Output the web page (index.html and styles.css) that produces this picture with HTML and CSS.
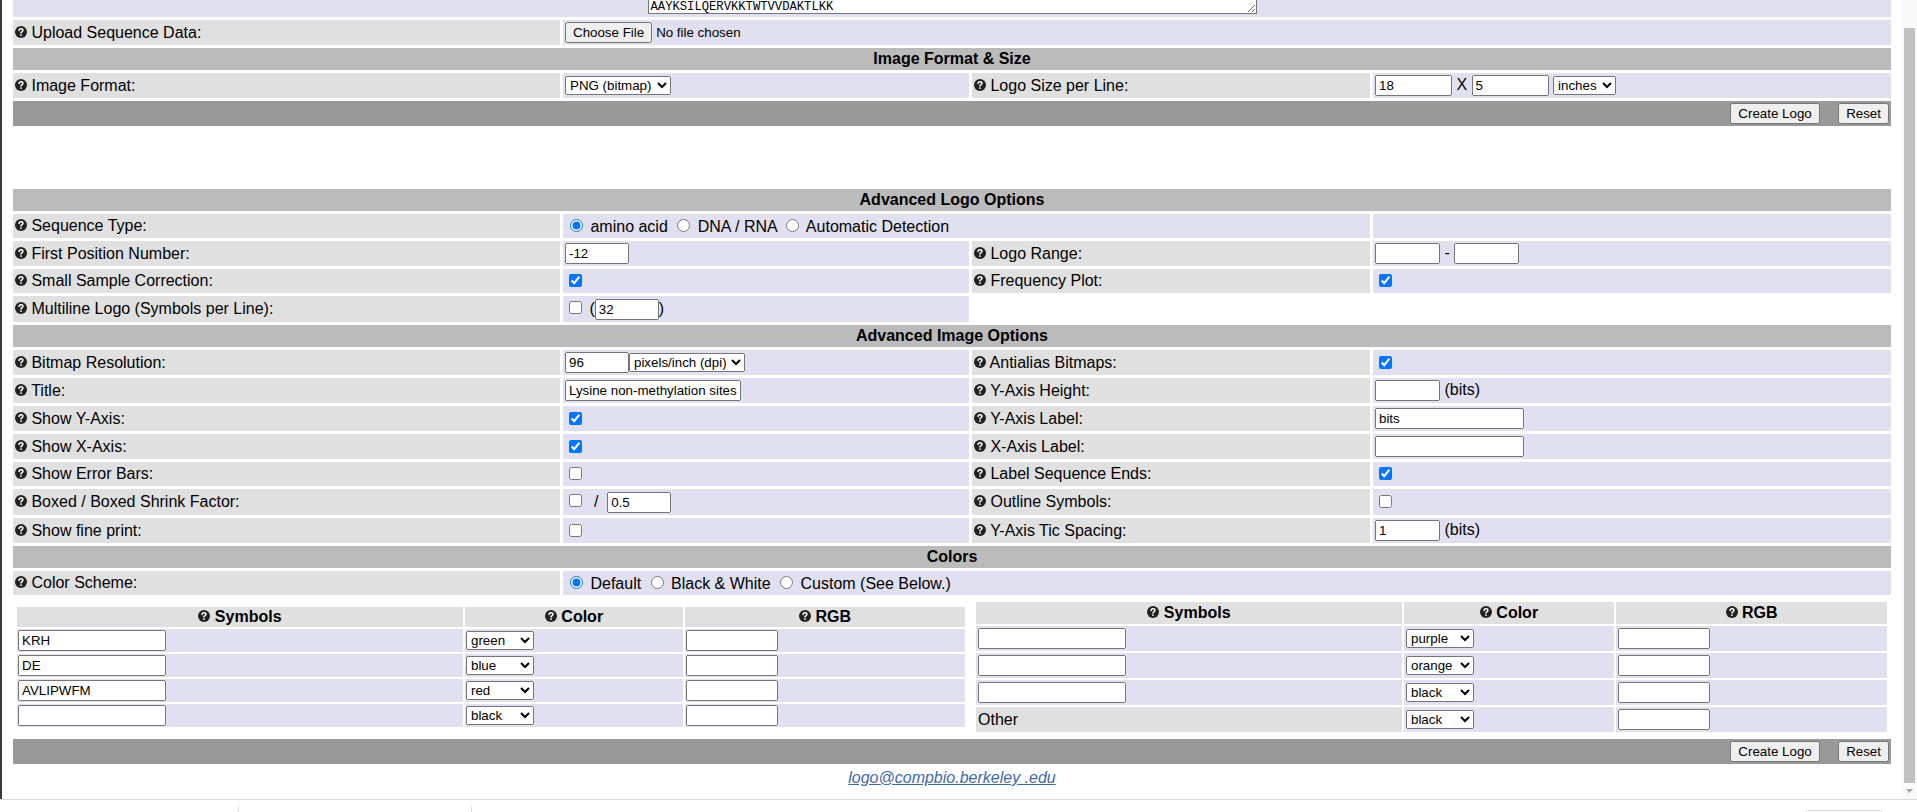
FILE: index.html
```html
<!DOCTYPE html>
<html lang="en">
<head>
<meta charset="utf-8">
<title>WebLogo - Create Sequence Logos</title>
<link rel="stylesheet" href="styles.css">
</head>
<body>
<svg class="svg-defs" xmlns="http://www.w3.org/2000/svg">
  <symbol id="qi" viewBox="0 0 12 12">
    <circle cx="6" cy="6" r="6" fill="#222"/>
    <path d="M4.1 4.5C4.1 3.4 4.9 2.7 6 2.7C7.1 2.7 7.9 3.4 7.9 4.3C7.9 5.1 7.3 5.5 6.8 5.8C6.3 6.1 6 6.4 6 7.1" fill="none" stroke="#fff" stroke-width="1.5" stroke-linecap="round"/>
    <circle cx="6" cy="9.1" r="0.95" fill="#fff"/>
  </symbol>
</svg>
<div class="screen">
  <div class="frame-edge"></div>
  <div class="viewport">
    <div class="page">
      <form class="logo-form" action="#">
        <table class="opts">
          <colgroup><col class="c1"><col class="c2"><col class="c3"><col class="c4"></colgroup>
          <tr>
            <td colspan="4" class="val seq-cell"><div class="seq-clip"><textarea class="seq" spellcheck="false" readonly>GGKKSILQERVKKTWTVVDAKTLKK
LLKKSILQERVKKTWTVVDAKTLKK
PPKKSILQERVKKTWTVVDAKTLKK
AAYKSILQERVKKTWTVVDAKTLKK</textarea></div></td>
          </tr>
          <tr>
            <td class="lab"><svg class="qi"><use href="#qi"/></svg> Upload Sequence Data:</td>
            <td colspan="3" class="val"><button type="button" class="btn">Choose File</button><span class="nofile">No file chosen</span></td>
          </tr>
          <tr><td colspan="4" class="head">Image Format &amp; Size</td></tr>
          <tr>
            <td class="lab"><svg class="qi"><use href="#qi"/></svg> Image Format:</td>
            <td class="val"><select class="sel w-png"><option>PNG (bitmap)</option></select></td>
            <td class="lab"><svg class="qi"><use href="#qi"/></svg> Logo Size per Line:</td>
            <td class="val"><input type="text" class="txt w77" value="18"> X <input type="text" class="txt w77" value="5"> <select class="sel w-inch"><option>inches</option></select></td>
          </tr>
          <tr>
            <td colspan="4" class="bar"><button type="button" class="btn">Create Logo</button> <button type="button" class="btn reset">Reset</button></td>
          </tr>
          <tr><td colspan="4" class="spacer"></td></tr>
          <tr><td colspan="4" class="head">Advanced Logo Options</td></tr>
          <tr>
            <td class="lab"><svg class="qi"><use href="#qi"/></svg> Sequence Type:</td>
            <td colspan="2" class="val"><input type="radio" name="st" checked> amino acid <input type="radio" name="st"> DNA / RNA <input type="radio" name="st"> Automatic Detection</td>
            <td class="val"></td>
          </tr>
          <tr>
            <td class="lab"><svg class="qi"><use href="#qi"/></svg> First Position Number:</td>
            <td class="val"><input type="text" class="txt w64" value="-12"></td>
            <td class="lab"><svg class="qi"><use href="#qi"/></svg> Logo Range:</td>
            <td class="val"><input type="text" class="txt w65" value=""> - <input type="text" class="txt w65" value=""></td>
          </tr>
          <tr>
            <td class="lab"><svg class="qi"><use href="#qi"/></svg> Small Sample Correction:</td>
            <td class="val"><input type="checkbox" checked></td>
            <td class="lab"><svg class="qi"><use href="#qi"/></svg> Frequency Plot:</td>
            <td class="val"><input type="checkbox" checked></td>
          </tr>
          <tr>
            <td class="lab"><svg class="qi"><use href="#qi"/></svg> Multiline Logo (Symbols per Line):</td>
            <td class="val"><input type="checkbox"> (<input type="text" class="txt w64" value="32">)</td>
          </tr>
          <tr><td colspan="4" class="head">Advanced Image Options</td></tr>
          <tr>
            <td class="lab"><svg class="qi"><use href="#qi"/></svg> Bitmap Resolution:</td>
            <td class="val"><input type="text" class="txt w64" value="96"><select class="sel w-dpi"><option>pixels/inch (dpi)</option></select></td>
            <td class="lab"><svg class="qi"><use href="#qi"/></svg> Antialias Bitmaps:</td>
            <td class="val"><input type="checkbox" checked></td>
          </tr>
          <tr>
            <td class="lab"><svg class="qi"><use href="#qi"/></svg> Title:</td>
            <td class="val"><input type="text" class="txt w176" value="Lysine non-methylation sites"></td>
            <td class="lab"><svg class="qi"><use href="#qi"/></svg> Y-Axis Height:</td>
            <td class="val"><input type="text" class="txt w65" value=""> (bits)</td>
          </tr>
          <tr>
            <td class="lab"><svg class="qi"><use href="#qi"/></svg> Show Y-Axis:</td>
            <td class="val"><input type="checkbox" checked></td>
            <td class="lab"><svg class="qi"><use href="#qi"/></svg> Y-Axis Label:</td>
            <td class="val"><input type="text" class="txt w149" value="bits"></td>
          </tr>
          <tr>
            <td class="lab"><svg class="qi"><use href="#qi"/></svg> Show X-Axis:</td>
            <td class="val"><input type="checkbox" checked></td>
            <td class="lab"><svg class="qi"><use href="#qi"/></svg> X-Axis Label:</td>
            <td class="val"><input type="text" class="txt w149" value=""></td>
          </tr>
          <tr>
            <td class="lab"><svg class="qi"><use href="#qi"/></svg> Show Error Bars:</td>
            <td class="val"><input type="checkbox"></td>
            <td class="lab"><svg class="qi"><use href="#qi"/></svg> Label Sequence Ends:</td>
            <td class="val"><input type="checkbox" checked></td>
          </tr>
          <tr>
            <td class="lab"><svg class="qi"><use href="#qi"/></svg> Boxed / Boxed Shrink Factor:</td>
            <td class="val"><input type="checkbox"> &nbsp;/ &nbsp;<input type="text" class="txt w64" value="0.5"></td>
            <td class="lab"><svg class="qi"><use href="#qi"/></svg> Outline Symbols:</td>
            <td class="val"><input type="checkbox"></td>
          </tr>
          <tr>
            <td class="lab"><svg class="qi"><use href="#qi"/></svg> Show fine print:</td>
            <td class="val"><input type="checkbox"></td>
            <td class="lab"><svg class="qi"><use href="#qi"/></svg> Y-Axis Tic Spacing:</td>
            <td class="val"><input type="text" class="txt w65" value="1"> (bits)</td>
          </tr>
          <tr><td colspan="4" class="head">Colors</td></tr>
          <tr>
            <td class="lab"><svg class="qi"><use href="#qi"/></svg> Color Scheme:</td>
            <td colspan="3" class="val"><input type="radio" name="cs" checked> Default <input type="radio" name="cs"> Black &amp; White <input type="radio" name="cs"> Custom (See Below.)</td>
          </tr>
          <tr>
            <td colspan="2" class="symcell">
              <table class="sym">
                <colgroup><col class="sl1"><col class="sl2"><col class="sl3"></colgroup>
                <tr><th><svg class="qi"><use href="#qi"/></svg> Symbols</th><th><svg class="qi"><use href="#qi"/></svg> Color</th><th><svg class="qi"><use href="#qi"/></svg> RGB</th></tr>
                <tr><td><input type="text" class="txt w148" value="KRH"></td><td><select class="sel w-col"><option>green</option></select></td><td><input type="text" class="txt w92" value=""></td></tr>
                <tr><td><input type="text" class="txt w148" value="DE"></td><td><select class="sel w-col"><option>blue</option></select></td><td><input type="text" class="txt w92" value=""></td></tr>
                <tr><td><input type="text" class="txt w148" value="AVLIPWFM"></td><td><select class="sel w-col"><option>red</option></select></td><td><input type="text" class="txt w92" value=""></td></tr>
                <tr><td><input type="text" class="txt w148" value=""></td><td><select class="sel w-col"><option>black</option></select></td><td><input type="text" class="txt w92" value=""></td></tr>
              </table>
            </td>
            <td colspan="2" class="symcell">
              <table class="sym wide">
                <colgroup><col class="sr1"><col class="sr2"><col class="sr3"></colgroup>
                <tr><th><svg class="qi"><use href="#qi"/></svg> Symbols</th><th><svg class="qi"><use href="#qi"/></svg> Color</th><th><svg class="qi"><use href="#qi"/></svg> RGB</th></tr>
                <tr><td><input type="text" class="txt w148" value=""></td><td><select class="sel w-col"><option>purple</option></select></td><td><input type="text" class="txt w92" value=""></td></tr>
                <tr><td><input type="text" class="txt w148" value=""></td><td><select class="sel w-col"><option>orange</option></select></td><td><input type="text" class="txt w92" value=""></td></tr>
                <tr><td><input type="text" class="txt w148" value=""></td><td><select class="sel w-col"><option>black</option></select></td><td><input type="text" class="txt w92" value=""></td></tr>
                <tr><td class="other">Other</td><td><select class="sel w-col"><option>black</option></select></td><td><input type="text" class="txt w92" value=""></td></tr>
              </table>
            </td>
          </tr>
          <tr>
            <td colspan="4" class="bar"><button type="button" class="btn">Create Logo</button> <button type="button" class="btn reset">Reset</button></td>
          </tr>
        </table>
      </form>
      <div class="footer"><a href="mailto:logo@compbio.berkeley.edu">logo@compbio.berkeley .edu</a></div>
    </div>
  </div>
  <div class="scrollbar">
    <div class="sb-thumb"></div>
    <div class="sb-down"><svg width="7" height="4" viewBox="0 0 7 4"><path d="M0 0H7L3.5 4Z" fill="#a3a3a3"/></svg></div>
  </div>
</div>
<div class="bottombar">
  <div class="bb-seg bb-a"></div>
  <div class="bb-seg bb-b"></div>
  <div class="bb-fill"></div>
  <div class="bb-box"></div>
  <div class="bb-end"></div>
</div>
</body>
</html>
```

FILE: styles.css
```css
html, body {
  margin: 0;
  padding: 0;
  background: #fff;
}
body {
  width: 1917px;
  height: 812px;
  overflow: hidden;
  font-family: "Liberation Sans", Arial, sans-serif;
  font-size: 16px;
  color: #000;
}
.svg-defs {
  display: none;
}
.screen {
  display: flex;
  height: 799px;
}
.frame-edge {
  flex: none;
  width: 2px;
  background: #3a3a3a;
}
.viewport {
  flex: 1;
  min-width: 0;
  overflow: hidden;
}
.page {
  padding: 0 8px;
}
.logo-form {
  margin: 0;
}

/* main options table */
.opts {
  width: 1884px;
  table-layout: fixed;
  border-spacing: 3px;
  margin-top: -3px;
}
.opts td {
  padding: 2px;
}
.c1 { width: 547px; }
.c2 { width: 406px; }
.c3 { width: 398px; }
.c4 { width: 518px; }

.lab { background: #e0e0e0; }
.val { background: #e0e0f0; }
.head {
  background: #bbbbbb;
  font-weight: bold;
  text-align: center;
}
.bar {
  background: #999999;
  text-align: right;
}
.opts td.spacer {
  height: 57px;
  padding: 0;
}

.qi {
  width: 12px;
  height: 12px;
}

/* sequence textarea (scrolled partly out of view) */
.opts td.seq-cell {
  padding: 0 2px 3px;
}
.seq-clip {
  height: 14px;
  display: flex;
  justify-content: center;
  align-items: flex-end;
  overflow: hidden;
}
.seq {
  flex: none;
  margin: 0;
  width: 609px;
  height: 59px;
  box-sizing: border-box;
  padding: 2px;
  border: 1px solid #767676;
  font-family: "Liberation Mono", "Courier New", monospace;
  font-size: 12.2px;
  line-height: 14px;
  color: #000;
  overflow: hidden;
  resize: both;
}

/* form controls */
.txt, .sel, .btn {
  font-family: "Liberation Sans", Arial, sans-serif;
  font-size: 13.333px;
}
.txt {
  box-sizing: border-box;
  height: 21px;
  margin: 0;
}
.w64 { width: 64px; }
.w65 { width: 65px; }
.w77 { width: 77px; }
.w92 { width: 92px; }
.w148 { width: 148px; }
.w149 { width: 149px; }
.w176 { width: 176px; }
.sel {
  box-sizing: border-box;
  margin: 0;
}
.w-png { width: 106px; }
.w-inch { width: 63px; }
.w-dpi { width: 116px; }
.w-col { width: 68px; }
.btn {
  margin: 0;
}
.reset {
  margin-left: 14px;
}
.nofile {
  font-size: 13.333px;
  margin-left: 4px;
}

/* symbol colour tables */
.opts td.symcell {
  padding: 2px;
  vertical-align: middle;
}
.sym {
  width: 100%;
  table-layout: fixed;
  border-spacing: 2px;
}
.opts .sym td,
.opts .sym th {
  padding: 1px;
  background: #e0e0f0;
}
.opts .sym th {
  background: #e0e0e0;
  font-weight: bold;
  text-align: center;
}
.opts .sym.wide td,
.opts .sym.wide th {
  padding: 2px;
}
.opts .sym td.other {
  background: #e0e0e0;
}
.sl1 { width: 446px; }
.sl2 { width: 218px; }
.sl3 { width: 280px; }
.sr1 { width: 426px; }
.sr2 { width: 210px; }
.sr3 { width: 271px; }

.footer {
  text-align: center;
  margin-top: 2px;
}
.footer a {
  color: #4169aa;
  font-style: italic;
}

/* fake window scrollbar */
.scrollbar {
  flex: none;
  width: 15px;
  box-sizing: border-box;
  padding-top: 28px;
  background: #f9f9f9;
  display: flex;
  flex-direction: column;
}
.sb-thumb {
  flex: 1;
  margin: 0 2px;
  background: #c1c1c1;
}
.sb-down {
  height: 16px;
  display: flex;
  align-items: center;
  justify-content: center;
}

/* bottom browser bar */
.bottombar {
  height: 13px;
  box-sizing: border-box;
  border-top: 1px solid #dcdcdc;
  display: flex;
}
.bb-seg {
  margin-top: 6px;
  border-right: 1px solid #dddddd;
}
.bb-a { width: 238px; }
.bb-b { width: 232px; }
.bb-fill { flex: 1; }
.bb-box {
  width: 74px;
  margin-top: 10px;
  border: 1px solid #dddddd;
  border-bottom: none;
  border-radius: 3px 3px 0 0;
}
.bb-end { width: 35px; }
```
